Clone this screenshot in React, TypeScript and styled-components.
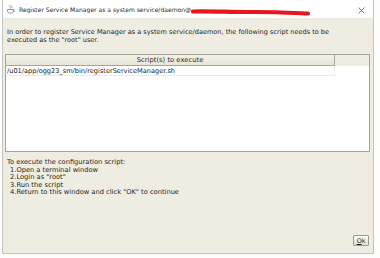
import React from 'react';
import styled, { createGlobalStyle } from 'styled-components';

const GlobalStyle = createGlobalStyle`
  html, body {
    margin: 0;
    padding: 0;
    background: #fdfdfd;
  }
`;

const Window = styled.div`
  margin-left: 2px;
  width: 370px;
  height: 253px;
  display: flex;
  flex-direction: column;
  border: 1px solid #c4c4c4;
  border-top: none;
  font-family: "DejaVu Sans", Verdana, sans-serif;
  color: #1e1e1e;
`;

const TitleBar = styled.div`
  height: 18px;
  display: flex;
  align-items: center;
  background: #ffffff;
  padding: 0 6px 0 3px;
  gap: 3px;
`;

const Title = styled.span`
  font-size: 6.05px;
  color: #2a2a2a;
  white-space: nowrap;
`;

const Scribble = styled.svg`
  flex: 0 0 auto;
  margin-left: -3px;
  margin-top: 6px;
`;

const Spacer = styled.div`
  flex: 1;
`;

const Close = styled.svg`
  flex: 0 0 auto;
  margin-right: 2px;
  margin-top: 2px;
`;

const Body = styled.div`
  flex: 1;
  display: flex;
  flex-direction: column;
  background: #efede1;
  padding: 11px 3px 7px 2px;
`;

const Paragraph = styled.p`
  margin: 0 0 0 2px;
  font-size: 6.55px;
  line-height: 7.5px;
  white-space: nowrap;
`;

const TableBox = styled.div`
  margin-top: 10px;
  height: 96px;
  border: 1px solid #a6a59b;
  display: flex;
  flex-direction: column;
  background: #ffffff;
`;

const HeaderRow = styled.div`
  display: flex;
  background: #efede1;
`;

const HeaderCell = styled.div<{ $w: number }>`
  width: ${p => p.$w}px;
  height: 10px;
  border-right: 1px solid #a6a59b;
  border-bottom: 1px solid #a6a59b;
  display: flex;
  align-items: center;
  justify-content: center;
  font-size: 6.8px;
  color: #2a2a2a;
  background: linear-gradient(#f3f1e6, #e8e5d6);
`;

const Row = styled.div<{ $w: number }>`
  width: ${p => p.$w}px;
  height: 10px;
  display: flex;
  align-items: center;
  padding-left: 1px;
  border-right: 1px solid #ecebea;
  border-bottom: 1px solid #ecebea;
  font-size: 6.6px;
  color: #1a1a1a;
  box-sizing: border-box;
  white-space: nowrap;
`;

const Steps = styled.div`
  margin-top: 7px;
  display: flex;
  flex-direction: column;
`;

const Step = styled.div<{ $indent?: boolean }>`
  margin-left: ${p => (p.$indent ? 5 : 2)}px;
  font-size: 6.7px;
  line-height: 7.6px;
  white-space: nowrap;
`;

const Footer = styled.div`
  margin-top: auto;
  display: flex;
  justify-content: flex-end;
`;

const OkButton = styled.button`
  width: 16px;
  height: 11px;
  padding: 0;
  margin-right: 1px;
  border: 1px solid #9c9a8c;
  border-radius: 1px;
  background: linear-gradient(#fbfaf4, #e4e1d0);
  font-family: "DejaVu Sans", Verdana, sans-serif;
  font-size: 6.4px;
  color: #1e1e1e;
  display: flex;
  align-items: center;
  justify-content: center;
  u {
    text-decoration: underline;
  }
`;

function JavaIcon() {
  return (
    <svg width="10" height="10" viewBox="0 0 10 10">
      <path d="M4 1 C3 2.5 5 3 4 4.5 M6 1.5 C5.2 2.8 6.6 3.2 5.8 4.3" stroke="#d06040" strokeWidth="0.7" fill="none" />
      <path d="M1.5 5.5 H7.5 V7 C7.5 8.5 6 9 4.5 9 C3 9 1.5 8.5 1.5 7 Z" fill="none" stroke="#6a7aa0" strokeWidth="0.8" />
      <path d="M7.5 6 C9 6 9 7.5 7.3 7.6" fill="none" stroke="#6a7aa0" strokeWidth="0.7" />
    </svg>
  );
}

export default function App() {
  return (
    <>
      <GlobalStyle />
      <Window>
        <TitleBar>
          <JavaIcon />
          <Title>Register Service Manager as a system service/daemon@</Title>
          <Scribble width="120" height="7" viewBox="0 0 120 7">
            <path d="M2 2.5 C20 2 40 3.2 60 3 C80 2.8 100 3.8 117 4.5" stroke="#e8161e" strokeWidth="4.2" strokeLinecap="round" fill="none" />
          </Scribble>
          <Spacer />
          <Close width="7" height="7" viewBox="0 0 7 7">
            <path d="M0.5 0.5 L6.5 6.5 M6.5 0.5 L0.5 6.5" stroke="#555" strokeWidth="0.8" />
          </Close>
        </TitleBar>
        <Body>
          <Paragraph>
            In order to register Service Manager as a system service/daemon, the following script needs to be
            <br />
            executed as the "root" user.
          </Paragraph>
          <TableBox>
            <HeaderRow>
              <HeaderCell $w={328}>Script(s) to execute</HeaderCell>
            </HeaderRow>
            <Row $w={329}>/u01/app/ogg23_sm/bin/registerServiceManager.sh</Row>
          </TableBox>
          <Steps>
            <Step>To execute the configuration script:</Step>
            <Step $indent>1.Open a terminal window</Step>
            <Step $indent>2.Login as "root"</Step>
            <Step $indent>3.Run the script</Step>
            <Step $indent>4.Return to this window and click "OK" to continue</Step>
          </Steps>
          <Footer>
            <OkButton>
              <u>O</u>k
            </OkButton>
          </Footer>
        </Body>
      </Window>
    </>
  );
}
